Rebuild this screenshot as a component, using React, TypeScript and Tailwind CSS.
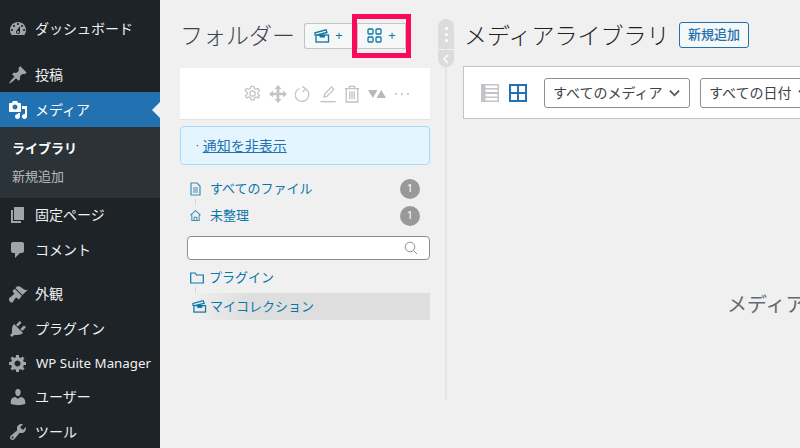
import React from "react";

const icons: Record<string, string> = {
  dashboard:
    "M3.76 16h12.48c1.1-1.37 1.76-3.11 1.76-5 0-4.42-3.58-8-8-8s-8 3.58-8 8c0 1.89.66 3.63 1.76 5zM10 4c.55 0 1 .45 1 1s-.45 1-1 1-1-.45-1-1 .45-1 1-1zM6 6c.55 0 1 .45 1 1s-.45 1-1 1-1-.45-1-1 .45-1 1-1zm8 0c.55 0 1 .45 1 1s-.45 1-1 1-1-.45-1-1 .45-1 1-1zm-5.37 5.55L12 7v6c0 1.1-.9 2-2 2s-2-.9-2-2c0-.57.24-1.08.63-1.45zM4 10c.55 0 1 .45 1 1s-.45 1-1 1-1-.45-1-1 .45-1 1-1zm12 0c.55 0 1 .45 1 1s-.45 1-1 1-1-.45-1-1 .45-1 1-1zm-5 3c0-.55-.45-1-1-1s-1 .45-1 1 .45 1 1 1 1-.45 1-1z",
  post: "M10.44 3.02l1.82-1.82 6.36 6.35-1.83 1.82c-1.05-.68-2.48-.57-3.41.36l-.75.75c-.92.93-1.04 2.35-.35 3.41l-1.83 1.82-2.41-2.41-2.8 2.79c-.42.42-3.38 2.71-3.8 2.29s1.86-3.39 2.28-3.81l2.79-2.79L4.1 9.36l1.83-1.82c1.05.69 2.48.57 3.4-.36l.75-.75c.93-.92 1.05-2.35.36-3.41z",
  media:
    "M13 11V4c0-.55-.45-1-1-1h-1.67L9 1H5L3.67 3H2c-.55 0-1 .45-1 1v7c0 .55.45 1 1 1h10c.55 0 1-.45 1-1zM7 4.5c1.38 0 2.5 1.12 2.5 2.5S8.38 9.5 7 9.5 4.5 8.38 4.5 7 5.62 4.5 7 4.5zM14 6h5v10.5c0 1.38-1.12 2.5-2.5 2.5S14 17.88 14 16.5s1.12-2.5 2.5-2.5c.17 0 .34.02.5.05V9h-3V6zm-4 8.05V13h2v3.5c0 1.38-1.12 2.5-2.5 2.5S7 17.88 7 16.5 8.12 14 9.5 14c.17 0 .34.02.5.05z",
  page: "M6 15V2h10v13H6zm-1 1h8v2H3V5h2v11z",
  comment:
    "M5 2h9c1.1 0 2 .9 2 2v7c0 1.1-.9 2-2 2h-2l-5 5v-5H5c-1.1 0-2-.9-2-2V4c0-1.1.9-2 2-2z",
  appearance:
    "M14.48 11.06L7.41 3.99l1.5-1.5c.5-.56 2.3-.47 3.51.32 1.21.8 1.43 1.28 2.91 2.1 1.18.64 2.45 1.26 4.45.85zm-.71.71L6.7 4.7 4.93 6.47c-.39.39-.39 1.02 0 1.41l1.06 1.06c.39.39.39 1.03 0 1.42-.6.6-1.43 1.11-2.21 1.69-.35.26-.7.53-1.01.84C1.43 13.23.5 14.8 1.06 16.3c.6 1.59 2.33 3.07 3.72 1.91.56-.47.82-1.35 1.33-2.2.43-.72.89-1.43 1.46-2 .39-.39 1.02-.39 1.41 0l1.06 1.06c.39.39 1.02.39 1.41 0z",
  plugin:
    "M13.11 4.36L9.87 7.6 8 5.73l3.24-3.24c.35-.34 1.05-.2 1.56.32.52.51.66 1.21.31 1.55zm-8 1.77l.91-1.12 9.01 9.01-1.19.84c-.71.71-2.63 1.16-3.82 1.16H6.14L4.9 17.26c-.59.59-1.54.59-2.12 0-.59-.58-.59-1.53 0-2.12l1.24-1.24v-3.88c0-1.13.4-3.19 1.09-3.89zm7.26 3.97l3.24-3.24c.34-.35 1.04-.21 1.55.31.52.51.66 1.21.31 1.55l-3.24 3.25z",
  settings:
    "M18 12h-2.18c-.17.7-.44 1.35-.81 1.93l1.54 1.54-2.1 2.1-1.54-1.54c-.58.36-1.23.63-1.91.79V19H8v-2.18c-.68-.16-1.33-.43-1.91-.79l-1.54 1.54-2.12-2.12 1.54-1.54c-.36-.58-.63-1.23-.79-1.91H1V9.03h2.17c.16-.7.44-1.35.8-1.94L2.43 5.55l2.1-2.1 1.54 1.54c.58-.37 1.24-.64 1.93-.81V2h3v2.18c.68.16 1.33.43 1.91.79l1.54-1.54 2.12 2.12-1.54 1.54c.36.59.64 1.24.8 1.94H18V12zm-8.5 1.5c1.66 0 3-1.34 3-3s-1.34-3-3-3-3 1.34-3 3 1.34 3 3 3z",
  users:
    "M10 9.25c-2.27 0-2.73-3.44-2.73-3.44C7 4.02 7.82 2 9.97 2c2.16 0 2.98 2.02 2.71 3.81 0 0-.41 3.44-2.68 3.44zm0 2.57L12.72 10c2.39 0 4.52 2.33 4.52 4.53v2.49s-3.65 1.13-7.24 1.13c-3.65 0-7.24-1.13-7.24-1.13v-2.49c0-2.25 1.94-4.48 4.47-4.48z",
  tools:
    "M16.68 9.77c-1.34 1.34-3.3 1.67-4.95.99l-5.41 6.52c-.99.99-2.59.99-3.58 0s-.99-2.59 0-3.57l6.52-5.42c-.68-1.65-.35-3.61.99-4.95 1.28-1.28 3.12-1.62 4.72-1.06l-2.89 2.89 2.82 2.82 2.86-2.87c.53 1.58.18 3.39-1.08 4.65zM3.81 16.21c.4.39 1.04.39 1.43 0 .4-.4.4-1.04 0-1.43-.39-.4-1.03-.4-1.43 0-.39.39-.39 1.03 0 1.43z",
};

function MenuIcon({ name, color = "#a0a5aa" }: { name: string; color?: string }) {
  return (
    <svg viewBox="0 0 20 20" className="w-5 h-5 shrink-0" fill={color}>
      <path d={icons[name]} />
    </svg>
  );
}

function MenuRow({ icon, label, small }: { icon: string; label: string; small?: boolean }) {
  return (
    <div className="h-[34.4px] flex items-center pl-2 gap-[7px] text-sm text-[#f0f0f1] whitespace-nowrap">
      <MenuIcon name={icon} />
      <span className={small ? "text-[13.3px] ml-px" : ""}>{label}</span>
    </div>
  );
}

function Sidebar() {
  return (
    <div className="w-40 shrink-0 h-full bg-[#1d2327] pt-[11.5px]">
      <MenuRow icon="dashboard" label="ダッシュボード" />
      <div className="h-3" />
      <MenuRow icon="post" label="投稿" />
      <div className="relative h-[35px] bg-[#2271b1] flex items-center pl-2 gap-[7px] text-sm text-white">
        <MenuIcon name="media" color="#ffffff" />
        <span>メディア</span>
        <div className="absolute right-0 top-[10px] w-0 h-0 border-y-[8px] border-y-transparent border-r-[8px] border-r-[#f0f0f1]" />
      </div>
      <div className="h-[71px] bg-[#2c3338] pt-[7px] text-[13px]">
        <div className="h-7 flex items-center pl-3 font-bold text-white">ライブラリ</div>
        <div className="h-7 flex items-center pl-3 text-[#b4b9be]">新規追加</div>
      </div>
      <MenuRow icon="page" label="固定ページ" />
      <MenuRow icon="comment" label="コメント" />
      <div className="h-[10px]" />
      <MenuRow icon="appearance" label="外観" />
      <MenuRow icon="plugin" label="プラグイン" />
      <MenuRow icon="settings" label="WP Suite Manager" small />
      <MenuRow icon="users" label="ユーザー" />
      <MenuRow icon="tools" label="ツール" />
    </div>
  );
}

function CollectionIcon({ className }: { className: string }) {
  return (
    <svg viewBox="0 0 16 14" className={className} fill="none" stroke="#0b76a8" strokeWidth="1.3">
      <path d="M1 6.5 L1 3.8 L12 0.8 L13 3.5 L3 6" />
      <rect x="2" y="6" width="12.5" height="7" />
      <rect x="5.5" y="6" width="5.5" height="2.5" fill="#0b76a8" stroke="none" />
    </svg>
  );
}

function FolderToolbar() {
  return (
    <div className="h-[52px] bg-white flex items-center justify-end pr-[20px] border-b border-[#e2e2e2]">
      <svg viewBox="0 0 24 24" className="w-[17px] h-[17px]" fill="none" stroke="#c0c3c7" strokeWidth="1.8">
        <path d="M10 2h4l.7 3 2.5 1.1 2.7-1.5 2 3.4-2.300 2.100v2.800l2.300 2.100-2 3.400-2.700-1.500-2.500 1.100-.7 3h-4l-.7-3-2.500-1.100-2.700 1.500-2-3.400 2.300-2.100v-2.800L1.400 8l2-3.400 2.700 1.500 2.500-1.100z" />
        <circle cx="12" cy="12" r="3.8" />
      </svg>
      <svg viewBox="0 0 20 20" className="w-[18px] h-[18px] ml-[8px]" fill="#c0c3c7">
        <path d="M10 0l4 4.500H11.500v4h4V6l4.500 4-4.500 4v-2.500h-4v4H14L10 20l-4-4.500h2.500v-4h-4V14L0 10l4.500-4v2.500h4v-4H6z" />
      </svg>
      <svg viewBox="0 0 20 20" className="w-[17px] h-[18px] ml-[8px]" fill="none" stroke="#c0c3c7" strokeWidth="1.5">
        <path d="M12.500 4.200A8 7.800 0 1 1 5.500 3.500" />
        <path d="M8.500 0.800l4.300 3.300-4 3.300" />
      </svg>
      <svg viewBox="0 0 20 20" className="w-[18px] h-[18px] ml-[7px]" fill="none" stroke="#c0c3c7" strokeWidth="1.4">
        <path d="M5.500 13.500l.8-3.500 7.500-7.800 2.700 2.600-7.500 7.600z" />
        <path d="M1.500 18.500h17" strokeWidth="1.6" />
      </svg>
      <svg viewBox="0 0 18 20" className="w-[16px] h-[18px] ml-[7px]" fill="none" stroke="#c0c3c7" strokeWidth="1.5">
        <path d="M1 4h16M6 4V1.500h6V4M2.500 4v15h13V4M6.500 7v9M9 7v9M11.500 7v9" />
      </svg>
      <svg viewBox="0 0 18 10" className="w-[18px] h-[10px] ml-[8px]" fill="#b5b9bd">
        <path d="M0 1h9.500L4.800 9zM8.500 9L13.300 1 18 9z" />
      </svg>
      <svg viewBox="0 0 16 4" className="w-4 h-1 ml-[8px]" fill="#c0c3c7">
        <circle cx="2" cy="2" r="1.1" />
        <circle cx="8" cy="2" r="1.1" />
        <circle cx="14" cy="2" r="1.1" />
      </svg>
    </div>
  );
}

function Badge() {
  return (
    <div className="w-5 h-5 rounded-full bg-[#999999] text-white text-[11px] flex items-center justify-center">
      1
    </div>
  );
}

function FolderColumn() {
  return (
    <div className="w-[250px] shrink-0 ml-5 pt-[14px]">
      <div className="h-[43px] flex items-center">
        <div className="w-[124px] text-[23px] font-light text-[#3c434a] whitespace-nowrap">フォルダー</div>
        <div className="w-12 h-[26px] bg-[#f6f7f7] border border-[#c3c4c7] border-r-0 rounded-l-[3px] flex items-center justify-center gap-[5px] text-[13px] text-[#0b76a8]">
          <CollectionIcon className="w-[16px] h-[14px]" />
          <span>+</span>
        </div>
        <div className="border-[5px] border-[#fa0a5a] py-1 px-0">
          <div className="w-[49px] h-[26px] bg-[#f6f7f7] border border-[#c3c4c7] flex items-center justify-center gap-[6px] text-[13px] text-[#0b76a8]">
            <svg viewBox="0 0 15 15" className="w-[15px] h-[15px]" fill="none" stroke="#0b76a8" strokeWidth="1.3">
              <rect x="1" y="1" width="5" height="5" rx="1" />
              <rect x="9" y="1" width="5" height="5" rx="1" />
              <rect x="1" y="9" width="5" height="5" rx="1" />
              <rect x="9" y="9" width="5" height="5" rx="1" />
            </svg>
            <span>+</span>
          </div>
        </div>
      </div>

      <div className="mt-[11px]">
        <FolderToolbar />
      </div>

      <div className="mt-[6px] h-[39px] flex items-center pl-[15px] gap-[4px] rounded-[4px] border border-[#a5dafc] bg-[#e5f5ff] text-sm text-[#2271b1]">
        <span className="text-[#555d66] text-[10px]">·</span>
        <span className="underline">通知を非表示</span>
      </div>

      <div className="mt-[10px] relative">
        <div className="h-[27px] flex items-center pl-[10px] pr-[10px] text-[13px] text-[#0b76a8]">
          <svg viewBox="0 0 11 14" className="w-[11px] h-[14px] shrink-0" fill="none" stroke="#3d8fb8" strokeWidth="1.2">
            <path d="M1 1h6l3 3v9H1zM3 6h5M3 8h5M3 10h5" />
          </svg>
          <span className="ml-[9px]">すべてのファイル</span>
          <div className="ml-auto">
            <Badge />
          </div>
        </div>
        <div className="h-[27px] flex items-center pl-[10px] pr-[10px] text-[13px] text-[#0b76a8]">
          <svg viewBox="0 0 12 12" className="w-[11px] h-[11px] shrink-0" fill="none" stroke="#3d8fb8" strokeWidth="1.1">
            <path d="M0.500 5.500L6 0.800l5.500 4.700M2 5v6.500h8V5M4.500 11.500V8h3v3.500" />
          </svg>
          <span className="ml-[9px]">未整理</span>
          <div className="ml-auto">
            <Badge />
          </div>
        </div>
        <div className="absolute left-[15px] top-[24px] w-px h-[6px] bg-[#d5d5d5]" />
      </div>

      <div className="mt-[7px] ml-[7px] h-6 bg-white border border-[#8c8f94] rounded-[4px] flex items-center justify-end pr-[11px]">
        <svg viewBox="0 0 14 14" className="w-[14px] h-[14px]" fill="none" stroke="#8c8f94" strokeWidth="1">
          <circle cx="6" cy="6" r="4.8" />
          <path d="M9.500 9.500L13 13" />
        </svg>
      </div>

      <div className="relative mt-[3px]">
        <div className="h-[30px] flex items-center pl-[10px] text-[13px] text-[#0b76a8]">
          <svg viewBox="0 0 14 12" className="w-[14px] h-[12px] shrink-0" fill="none" stroke="#0b76a8" strokeWidth="1.2">
            <path d="M0.700 11V1h4.500l1.300 2h6.800v8z" />
          </svg>
          <span className="ml-[5px]">プラグイン</span>
        </div>
        <div className="h-[27px] ml-[10px] flex items-center pl-[2px] text-[13px] text-[#0b76a8] bg-gradient-to-r from-[#f0f0f1] to-[#dedede] to-[25%]">
          <CollectionIcon className="w-[15px] h-[13px] shrink-0" />
          <span className="ml-[3px]">マイコレクション</span>
        </div>
        <div className="absolute left-[15px] top-[24px] w-px h-[6px] bg-[#d5d5d5]" />
      </div>
    </div>
  );
}

function Gutter() {
  return (
    <div className="w-[33px] shrink-0 relative">
      <div className="absolute left-[15px] top-[19px] w-[1.5px] h-[381px] bg-[#e4e4e4]" />
      <div className="absolute left-2 top-[19px] w-4 h-[30px] bg-[#dcdcdc] rounded-t-[8px] flex flex-col items-center justify-center gap-[3px]">
        <div className="w-[3px] h-[3px] rounded-full bg-white" />
        <div className="w-[3px] h-[3px] rounded-full bg-white" />
        <div className="w-[3px] h-[3px] rounded-full bg-white" />
      </div>
      <div className="absolute left-2 top-[50px] w-4 h-[17px] bg-[#dcdcdc] rounded-b-[8px] flex items-center justify-center">
        <svg viewBox="0 0 8 10" className="w-2 h-[10px]" fill="none" stroke="#ffffff" strokeWidth="1.4">
          <path d="M6 1L2 5l4 4" />
        </svg>
      </div>
    </div>
  );
}

function Select({ label, className }: { label: string; className: string }) {
  return (
    <div
      className={
        "h-[30px] shrink-0 bg-white border border-[#8c8f94] rounded-[3px] flex items-center pl-[8px] text-sm text-[#3c434a] " +
        className
      }
    >
      <span className="whitespace-nowrap">{label}</span>
      <svg viewBox="0 0 12 8" className="w-[11px] h-2 ml-[7px] shrink-0" fill="none" stroke="#50575e" strokeWidth="2">
        <path d="M1 1.500l5 5 5-5" />
      </svg>
    </div>
  );
}

function MediaPane() {
  return (
    <div className="flex-1 min-w-0 overflow-hidden">
      <div className="mt-[22px] h-[26px] flex items-center pl-[1px]">
        <div className="text-[23px] font-light text-[#1d2327] whitespace-nowrap w-[215px]">メディアライブラリ</div>
        <div className="w-[70px] h-[26px] border border-[#2271b1] rounded-[3px] bg-[#f6f7f7] text-[#2271b1] text-[13px] font-medium flex items-center justify-center">
          新規追加
        </div>
      </div>
      <div className="mt-[18px] h-[53px] w-[400px] bg-white border border-[#c3c4c7] flex items-center pl-[17px]">
        <svg viewBox="0 0 18 18" className="w-[18px] h-[18px] shrink-0" fill="#c3c4c7">
          <path d="M0 0h18v18H0z M4.500 1.500v2.500H16.500V1.500z M4.500 5.500V8H16.500V5.500z M4.500 10v2.500H16.500V10z M4.500 14v2.500H16.500V14z" fillRule="evenodd" />
        </svg>
        <svg viewBox="0 0 18 18" className="w-[18px] h-[18px] ml-[10px] shrink-0" fill="none" stroke="#2271b1" strokeWidth="2">
          <path d="M1 1h16v16H1zM9 1v16M1 9h16" />
        </svg>
        <Select label="すべてのメディア" className="w-[146px] ml-[17px]" />
        <Select label="すべての日付" className="w-[120px] ml-[10px]" />
      </div>
      <div className="mt-[172px] pl-[264px] text-xl leading-7 text-[#646970] whitespace-nowrap">
        メディアファイルが見つかりません。
      </div>
    </div>
  );
}

export default function App() {
  return (
    <div
      className="w-[800px] h-[448px] overflow-hidden flex bg-[#f0f0f1]"
      style={{ fontFamily: '"Noto Sans", "Noto Sans CJK JP", sans-serif' }}
    >
      <Sidebar />
      <FolderColumn />
      <Gutter />
      <MediaPane />
    </div>
  );
}
